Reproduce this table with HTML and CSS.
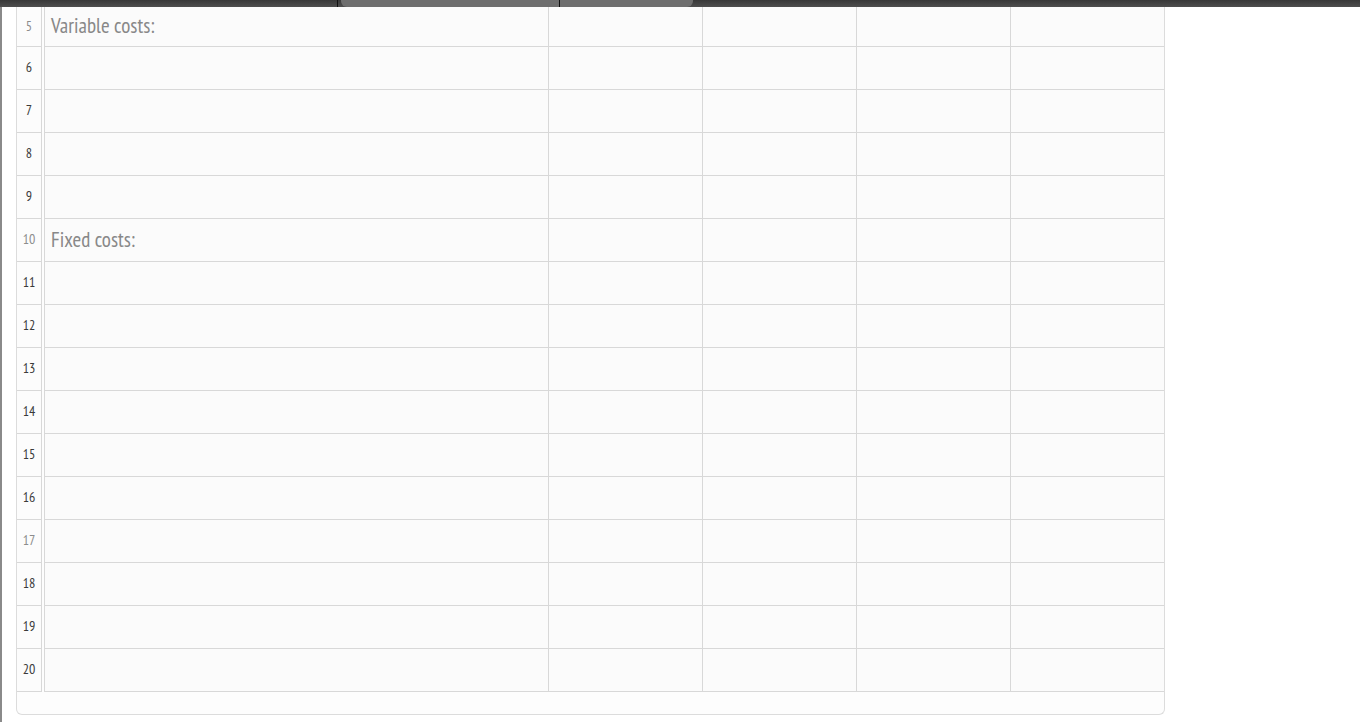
FILE: index.html
```html
<!DOCTYPE html>
<html lang="en">
<head>
    <meta charset="UTF-8">
    <meta name="viewport" content="width=device-width, initial-scale=1.0">
    <title>Cost Sheet</title>
    <link rel="stylesheet" href="styles.css">
</head>
<body>
    <!-- top toolbar, only its lower edge is visible -->
    <div class="topbar">
        <div class="topbar-left"></div>
        <div class="topbar-divider"></div>
        <div class="topbar-tabs">
            <div class="tab tab-first"></div>
            <div class="tab-divider"></div>
            <div class="tab tab-last"></div>
        </div>
    </div>

    <div class="page">
        <div class="sheet">
            <div class="row row-cut">
                <div class="num muted">5</div>
                <div class="gap"></div>
                <div class="cell cell-first label">Variable costs:</div>
                <div class="cell"></div><div class="cell"></div><div class="cell"></div><div class="cell cell-last"></div>
            </div>
            <div class="row">
                <div class="num">6</div><div class="gap"></div>
                <div class="cell cell-first"></div>
                <div class="cell"></div><div class="cell"></div><div class="cell"></div><div class="cell cell-last"></div>
            </div>
            <div class="row">
                <div class="num">7</div><div class="gap"></div>
                <div class="cell cell-first"></div>
                <div class="cell"></div><div class="cell"></div><div class="cell"></div><div class="cell cell-last"></div>
            </div>
            <div class="row">
                <div class="num">8</div><div class="gap"></div>
                <div class="cell cell-first"></div>
                <div class="cell"></div><div class="cell"></div><div class="cell"></div><div class="cell cell-last"></div>
            </div>
            <div class="row">
                <div class="num">9</div><div class="gap"></div>
                <div class="cell cell-first"></div>
                <div class="cell"></div><div class="cell"></div><div class="cell"></div><div class="cell cell-last"></div>
            </div>
            <div class="row">
                <div class="num muted">10</div><div class="gap"></div>
                <div class="cell cell-first label">Fixed costs:</div>
                <div class="cell"></div><div class="cell"></div><div class="cell"></div><div class="cell cell-last"></div>
            </div>
            <div class="row">
                <div class="num">11</div><div class="gap"></div>
                <div class="cell cell-first"></div>
                <div class="cell"></div><div class="cell"></div><div class="cell"></div><div class="cell cell-last"></div>
            </div>
            <div class="row">
                <div class="num">12</div><div class="gap"></div>
                <div class="cell cell-first"></div>
                <div class="cell"></div><div class="cell"></div><div class="cell"></div><div class="cell cell-last"></div>
            </div>
            <div class="row">
                <div class="num">13</div><div class="gap"></div>
                <div class="cell cell-first"></div>
                <div class="cell"></div><div class="cell"></div><div class="cell"></div><div class="cell cell-last"></div>
            </div>
            <div class="row">
                <div class="num">14</div><div class="gap"></div>
                <div class="cell cell-first"></div>
                <div class="cell"></div><div class="cell"></div><div class="cell"></div><div class="cell cell-last"></div>
            </div>
            <div class="row">
                <div class="num">15</div><div class="gap"></div>
                <div class="cell cell-first"></div>
                <div class="cell"></div><div class="cell"></div><div class="cell"></div><div class="cell cell-last"></div>
            </div>
            <div class="row">
                <div class="num">16</div><div class="gap"></div>
                <div class="cell cell-first"></div>
                <div class="cell"></div><div class="cell"></div><div class="cell"></div><div class="cell cell-last"></div>
            </div>
            <div class="row">
                <div class="num muted">17</div><div class="gap"></div>
                <div class="cell cell-first"></div>
                <div class="cell"></div><div class="cell"></div><div class="cell"></div><div class="cell cell-last"></div>
            </div>
            <div class="row">
                <div class="num">18</div><div class="gap"></div>
                <div class="cell cell-first"></div>
                <div class="cell"></div><div class="cell"></div><div class="cell"></div><div class="cell cell-last"></div>
            </div>
            <div class="row">
                <div class="num">19</div><div class="gap"></div>
                <div class="cell cell-first"></div>
                <div class="cell"></div><div class="cell"></div><div class="cell"></div><div class="cell cell-last"></div>
            </div>
            <div class="row">
                <div class="num">20</div><div class="gap"></div>
                <div class="cell cell-first"></div>
                <div class="cell"></div><div class="cell"></div><div class="cell"></div><div class="cell cell-last"></div>
            </div>
        </div>
    </div>
</body>
</html>
```

FILE: styles.css
```css
body {
    margin: 0;
    background-color: #fff;
    font-family: "PT Sans Narrow", "Liberation Sans Narrow", "DejaVu Sans Condensed", "DejaVu Sans", sans-serif;
    font-stretch: condensed;
    overflow: hidden;
}
.topbar {
    display: flex;
    height: 7px;
    background: linear-gradient(#383838, #4e4e4e);
}
.topbar-left {
    width: 337px;
}
.topbar-divider {
    width: 1px;
    background-color: #111;
}
.topbar-tabs {
    display: flex;
    margin-left: 3px;
    width: 352px;
}
.tab {
    background-color: #6e6e6e;
}
.tab-first {
    width: 218px;
    border-bottom-left-radius: 6px;
}
.tab-divider {
    width: 1px;
    background-color: #111;
}
.tab-last {
    width: 133px;
    border-bottom-right-radius: 6px;
}
.page {
    border-left: 2px solid #8a8a8a;
    height: 715px;
}
.sheet {
    margin-left: 14px;
    width: 1147px;
    padding-bottom: 22px;
    border: 1px solid #dcdcdc;
    border-top: none;
    border-radius: 0 0 6px 6px;
    background-color: #fdfdfd;
}
.row {
    display: grid;
    grid-template-columns: 25px 2px 505px 154px 154px 154px 153px;
    height: 43px;
}
.row-cut {
    height: 40px;
}
.num {
    display: flex;
    align-items: center;
    justify-content: center;
    padding-bottom: 2px;
    border-right: 1px solid #d8d8d8;
    border-bottom: 1px solid #d8d8d8;
    background-color: #fcfcfc;
    font-size: 14px;
    color: #3a3a3a;
}
.num.muted {
    color: #8c8c8c;
}
.cell {
    border-right: 1px solid #d8d8d8;
    border-bottom: 1px solid #d8d8d8;
    background-color: #fbfbfb;
}
.cell-first {
    border-left: 1px solid #d8d8d8;
}
.cell-last {
    border-right: none;
}
.label {
    display: flex;
    align-items: center;
    padding-left: 6px;
    padding-bottom: 2px;
    font-size: 21px;
    color: #888;
}
```
